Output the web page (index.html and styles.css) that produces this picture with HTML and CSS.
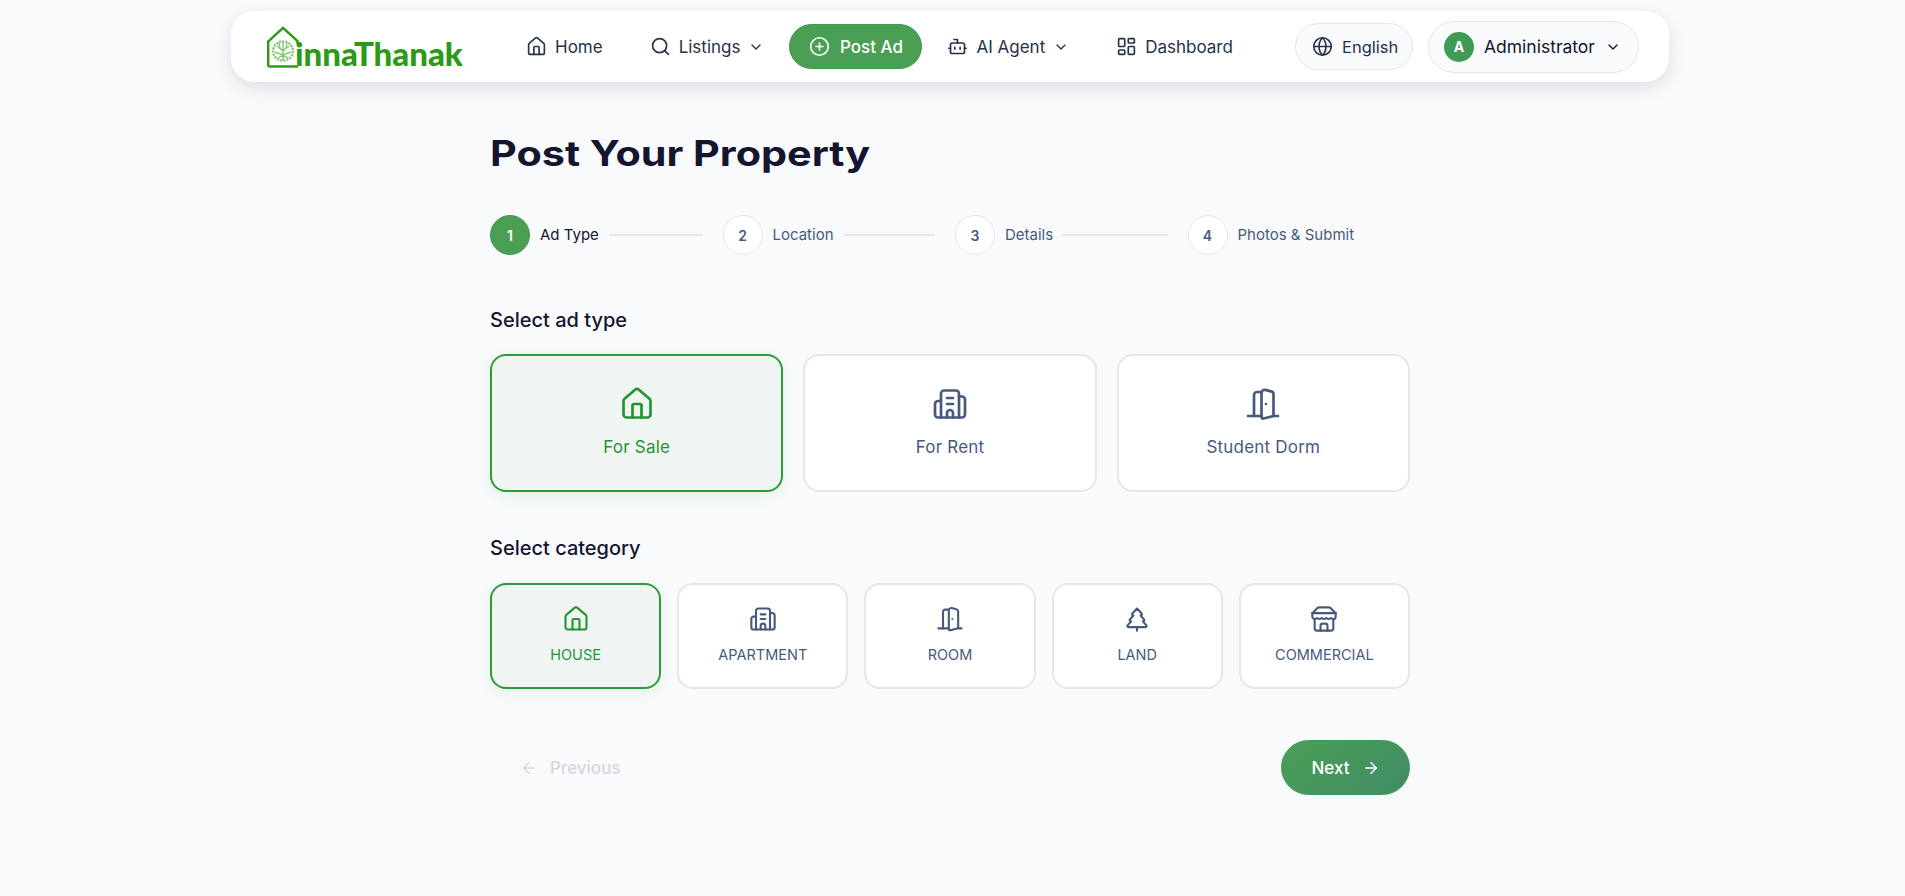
FILE: index.html
```html
<!DOCTYPE html>
<html lang="en">
<head>
  <meta charset="UTF-8">
  <meta name="viewport" content="width=device-width, initial-scale=1.0">
  <title>Post Your Property - innaThanak</title>
  <link rel="stylesheet" href="styles.css">
</head>
<body>
  <svg class="sprite" xmlns="http://www.w3.org/2000/svg">
    <symbol id="i-house" viewBox="0 0 24 24"><path d="M15 21v-8a1 1 0 0 0-1-1h-4a1 1 0 0 0-1 1v8"/><path d="M3 10a2 2 0 0 1 .709-1.528l7-5.999a2 2 0 0 1 2.582 0l7 5.999A2 2 0 0 1 21 10v9a2 2 0 0 1-2 2H5a2 2 0 0 1-2-2z"/></symbol>
    <symbol id="i-building" viewBox="0 0 24 24"><path d="M10 12h4"/><path d="M10 8h4"/><path d="M14 21v-3a2 2 0 0 0-4 0v3"/><path d="M6 10H4a2 2 0 0 0-2 2v7a2 2 0 0 0 2 2h16a2 2 0 0 0 2-2V9a2 2 0 0 0-2-2h-2"/><path d="M6 21V5a2 2 0 0 1 2-2h8a2 2 0 0 1 2 2v16"/></symbol>
    <symbol id="i-door" viewBox="0 0 24 24"><path d="M11 20H2"/><path d="M11 4.562v16.157a1 1 0 0 0 1.242.97L19 20V5.562a2 2 0 0 0-1.515-1.94l-4-1A2 2 0 0 0 11 4.561z"/><path d="M11 4H8a2 2 0 0 0-2 2v14"/><path d="M14 12h.01"/><path d="M22 20h-3"/></symbol>
    <symbol id="i-tree" viewBox="0 0 24 24"><path d="m17 14 3 3.3a1 1 0 0 1-.7 1.7H4.7a1 1 0 0 1-.7-1.7L7 14h-.3a1 1 0 0 1-.7-1.7L9 9h-.2A1 1 0 0 1 8 7.3L12 3l4 4.3a1 1 0 0 1-.8 1.7H15l3 3.3a1 1 0 0 1-.7 1.7H17Z"/><path d="M12 22v-3"/></symbol>
    <symbol id="i-store" viewBox="0 0 24 24"><path d="m2 7 4.41-4.41A2 2 0 0 1 7.83 2h8.34a2 2 0 0 1 1.42.59L22 7"/><path d="M4 12v8a2 2 0 0 0 2 2h12a2 2 0 0 0 2-2v-8"/><path d="M15 22v-4a2 2 0 0 0-2-2h-2a2 2 0 0 0-2 2v4"/><path d="M2 7h20"/><path d="M22 7v3a2 2 0 0 1-2 2a2.7 2.7 0 0 1-1.59-.63.7.7 0 0 0-.82 0A2.7 2.7 0 0 1 16 12a2.7 2.7 0 0 1-1.59-.63.7.7 0 0 0-.82 0A2.7 2.7 0 0 1 12 12a2.7 2.7 0 0 1-1.59-.63.7.7 0 0 0-.82 0A2.7 2.7 0 0 1 8 12a2.7 2.7 0 0 1-1.59-.63.7.7 0 0 0-.82 0A2.7 2.7 0 0 1 4 12a2 2 0 0 1-2-2V7"/></symbol>
    <symbol id="i-search" viewBox="0 0 24 24"><circle cx="11" cy="11" r="8"/><path d="m21 21-4.3-4.3"/></symbol>
    <symbol id="i-chevron" viewBox="0 0 24 24"><path d="m6 9 6 6 6-6"/></symbol>
    <symbol id="i-plus" viewBox="0 0 24 24"><circle cx="12" cy="12" r="10"/><path d="M8 12h8"/><path d="M12 8v8"/></symbol>
    <symbol id="i-bot" viewBox="0 0 24 24"><path d="M12 8V4H8"/><rect width="16" height="12" x="4" y="8" rx="2"/><path d="M2 14h2"/><path d="M20 14h2"/><path d="M15 13v2"/><path d="M9 13v2"/></symbol>
    <symbol id="i-dash" viewBox="0 0 24 24"><rect width="7" height="9" x="3" y="3" rx="1"/><rect width="7" height="5" x="14" y="3" rx="1"/><rect width="7" height="9" x="14" y="12" rx="1"/><rect width="7" height="5" x="3" y="16" rx="1"/></symbol>
    <symbol id="i-globe" viewBox="0 0 24 24"><circle cx="12" cy="12" r="10"/><path d="M12 2a14.5 14.5 0 0 0 0 20 14.5 14.5 0 0 0 0-20"/><path d="M2 12h20"/></symbol>
    <symbol id="i-right" viewBox="0 0 24 24"><path d="M5 12h14"/><path d="m12 5 7 7-7 7"/></symbol>
    <symbol id="i-left" viewBox="0 0 24 24"><path d="m12 19-7-7 7-7"/><path d="M19 12H5"/></symbol>
  </svg>

  <div class="page">
    <header class="navbar">
      <a class="logo" href="#">
        <svg class="logo-mark" viewBox="0 0 32 42" fill="none">
          <path d="M1.2 40.5V15.5L16 1.8 30.5 15v3" stroke="#2c9a14" stroke-width="2.4"/>
          <path d="M1.2 40.5H31" stroke="#2c9a14" stroke-width="2.4"/>
          <g stroke="#86c876" stroke-width="1.4">
            <ellipse cx="16" cy="25" rx="10" ry="9.5" stroke-width="2.4" stroke-dasharray="2.2 1"/>
            <path d="M16 16v18M10 20l6 5 6-5M8 26l8 3 8-3M11 32l5-3 5 3M12 17l1 5M20 17l-1 5"/>
          </g>
        </svg>
        <span class="logo-text">innaThanak</span>
      </a>

      <nav class="nav-links">
        <a class="nav-link" href="#"><svg class="icon"><use href="#i-house"/></svg>Home</a>
        <a class="nav-link" href="#"><svg class="icon"><use href="#i-search"/></svg>Listings<svg class="chev"><use href="#i-chevron"/></svg></a>
        <a class="post-btn" href="#"><svg class="icon"><use href="#i-plus"/></svg>Post Ad</a>
        <a class="nav-link" href="#"><svg class="icon"><use href="#i-bot"/></svg>AI Agent<svg class="chev"><use href="#i-chevron"/></svg></a>
        <a class="nav-link" href="#"><svg class="icon"><use href="#i-dash"/></svg>Dashboard</a>
      </nav>

      <div class="nav-right">
        <button class="lang-btn"><svg class="icon"><use href="#i-globe"/></svg>English</button>
        <button class="user-btn"><span class="avatar">A</span>Administrator<svg class="chev"><use href="#i-chevron"/></svg></button>
      </div>
    </header>

    <main class="wizard">
      <h1>Post Your Property</h1>

      <ol class="steps">
        <li class="step active"><span class="step-num">1</span><span class="step-label">Ad Type</span><span class="step-line"></span></li>
        <li class="step"><span class="step-num">2</span><span class="step-label">Location</span><span class="step-line"></span></li>
        <li class="step"><span class="step-num">3</span><span class="step-label">Details</span><span class="step-line"></span></li>
        <li class="step"><span class="step-num">4</span><span class="step-label">Photos &amp; Submit</span></li>
      </ol>

      <h2 class="field-label">Select ad type</h2>
      <div class="type-grid">
        <button class="type-card selected"><svg class="type-icon"><use href="#i-house"/></svg>For Sale</button>
        <button class="type-card"><svg class="type-icon"><use href="#i-building"/></svg>For Rent</button>
        <button class="type-card"><svg class="type-icon"><use href="#i-door"/></svg>Student Dorm</button>
      </div>

      <h2 class="field-label">Select category</h2>
      <div class="cat-grid">
        <button class="cat-card selected"><svg class="cat-icon"><use href="#i-house"/></svg>HOUSE</button>
        <button class="cat-card"><svg class="cat-icon"><use href="#i-building"/></svg>APARTMENT</button>
        <button class="cat-card"><svg class="cat-icon"><use href="#i-door"/></svg>ROOM</button>
        <button class="cat-card"><svg class="cat-icon"><use href="#i-tree"/></svg>LAND</button>
        <button class="cat-card"><svg class="cat-icon"><use href="#i-store"/></svg>COMMERCIAL</button>
      </div>

      <div class="wizard-nav">
        <button class="prev-btn" disabled><svg class="icon-sm"><use href="#i-left"/></svg>Previous</button>
        <button class="next-btn">Next<svg class="icon-sm"><use href="#i-right"/></svg></button>
      </div>
    </main>
  </div>
</body>
</html>
```

FILE: styles.css
```css
* { box-sizing: border-box; }

body {
  margin: 0;
  background: #f9fafc;
  color: #14152f;
  font-family: Inter, "Noto Sans", sans-serif;
}
a { text-decoration: none; color: inherit; }
button { font-family: inherit; cursor: pointer; }

.sprite { display: none; }

svg use { fill: none; stroke: currentColor; stroke-linecap: round; stroke-linejoin: round; }

.page {
  width: 1900px;
  padding-top: 11px;
}

/* navbar */
.navbar {
  width: 1438px;
  height: 71px;
  margin: 0 auto;
  padding: 0 30px 0 36px;
  display: flex;
  align-items: center;
  background: #fff;
  border-radius: 24px;
  box-shadow: 0 6px 18px rgba(20, 30, 60, 0.12);
}
.logo {
  display: flex;
  align-items: flex-end;
  width: 196px;
  height: 42px;
  margin-top: 1px;
}
.logo-mark { width: 32px; height: 42px; flex: none; }
.logo-text {
  margin-left: -4px;
  margin-bottom: -4px;
  font-family: Lato, sans-serif;
  font-weight: 900;
  font-size: 33px;
  line-height: 38px;
  color: #2c9a14;
}
.nav-links {
  display: flex;
  align-items: center;
  gap: 3px;
  margin-left: 41px;
  font-size: 17px;
  font-weight: 400;
  color: #26324a;
}
.nav-link {
  display: flex;
  align-items: center;
  gap: 8px;
  padding: 0 22px;
  height: 45px;
}
.icon { width: 21px; height: 21px; stroke-width: 1.9; flex: none; }
.chev { width: 16px; height: 16px; stroke-width: 2; flex: none; }
.post-btn {
  display: flex;
  align-items: center;
  justify-content: center;
  gap: 10px;
  width: 133px;
  height: 45px;
  border-radius: 23px;
  background: #4a9f55;
  border: 1px solid #3f9a4a;
  color: #fff;
  font-weight: 500;
}
.nav-right {
  margin-left: auto;
  display: flex;
  align-items: center;
  gap: 15px;
}
.lang-btn, .user-btn {
  display: flex;
  align-items: center;
  border: 1px solid #e5e7eb;
  background: #f9fafc;
  color: #26324a;
}
.lang-btn {
  gap: 9px;
  width: 118px;
  height: 47px;
  padding: 0 0 0 16px;
  border-radius: 24px;
  font-size: 16.5px;
}
.user-btn {
  gap: 10px;
  width: 211px;
  height: 52px;
  padding: 0 16px 0 15px;
  border-radius: 26px;
  color: #14152f;
  font-size: 17.5px;
}
.avatar {
  width: 30px;
  height: 30px;
  border-radius: 50%;
  background: #3f9a55;
  color: #fff;
  font-size: 14px;
  font-weight: 700;
  display: flex;
  align-items: center;
  justify-content: center;
  flex: none;
}

/* wizard */
.wizard {
  width: 920px;
  margin: 0 auto;
  padding-top: 49px;
}
h1 {
  margin: 0;
  font-size: 35px;
  line-height: 44px;
  font-weight: 700;
  transform: scaleX(1.18);
  transform-origin: left;
}
.steps {
  list-style: none;
  margin: 40px 0 0;
  padding: 0 10px 0 0;
  display: flex;
  gap: 20px;
}
.step {
  flex: 1;
  display: flex;
  align-items: center;
  gap: 10px;
  font-size: 15px;
  color: #475a7c;
}
.step-label { margin-top: -1px; }
.step-num {
  width: 40px;
  height: 40px;
  border-radius: 50%;
  border: 1px solid #e5e7eb;
  background: #fff;
  display: flex;
  align-items: center;
  justify-content: center;
  font-size: 14px;
  font-weight: 600;
  flex: none;
}
.step-line {
  flex: 1;
  height: 2px;
  background: #e5e7eb;
}
.step.active { color: #14152f; }
.step.active .step-num {
  background: #4a9f55;
  border-color: #3f9a4a;
  color: #fff;
}
.field-label {
  margin: 0;
  font-size: 20px;
  line-height: 24px;
  font-weight: 500;
  color: #14152f;
}
.steps + .field-label { margin-top: 53px; }
.type-grid + .field-label { margin-top: 44px; }

.type-grid {
  margin-top: 22px;
  display: grid;
  grid-template-columns: repeat(3, 1fr);
  gap: 20px;
}
.cat-grid {
  margin-top: 23px;
  display: grid;
  grid-template-columns: repeat(5, 1fr);
  gap: 16px;
}
.type-card, .cat-card {
  display: flex;
  flex-direction: column;
  align-items: center;
  justify-content: center;
  background: #fff;
  border: 2px solid #e5e7eb;
  border-radius: 16px;
  color: #475a7c;
  font-weight: 400;
}
.type-card {
  height: 138px;
  gap: 15px;
  padding-bottom: 4px;
  font-size: 17px;
  letter-spacing: 0.2px;
}
.cat-card {
  height: 106px;
  gap: 13px;
  padding-bottom: 5px;
  font-size: 14.5px;
}
.type-card.selected, .cat-card.selected {
  background: #f0f5f3;
  border-color: #2e9a3c;
  color: #239530;
  box-shadow: 0 4px 16px rgba(46, 154, 60, 0.1);
}
.type-icon { width: 36px; height: 36px; stroke-width: 1.8; }
.cat-icon { width: 28px; height: 28px; stroke-width: 1.8; }

.wizard-nav {
  margin-top: 51px;
  display: flex;
  align-items: center;
  justify-content: space-between;
}
.icon-sm { width: 18px; height: 18px; stroke-width: 2; flex: none; }
.prev-btn, .next-btn {
  display: flex;
  align-items: center;
  gap: 12px;
  height: 55px;
  border: none;
  font-size: 17px;
  font-weight: 500;
}
.prev-btn {
  background: none;
  color: #d5d8e0;
  padding: 0 0 0 30px;
  cursor: default;
}
.next-btn {
  width: 129px;
  justify-content: center;
  border-radius: 28px;
  border: 1px solid #3f9a55;
  background: linear-gradient(135deg, #4a9f55, #418c66);
  color: #fff;
}
```
